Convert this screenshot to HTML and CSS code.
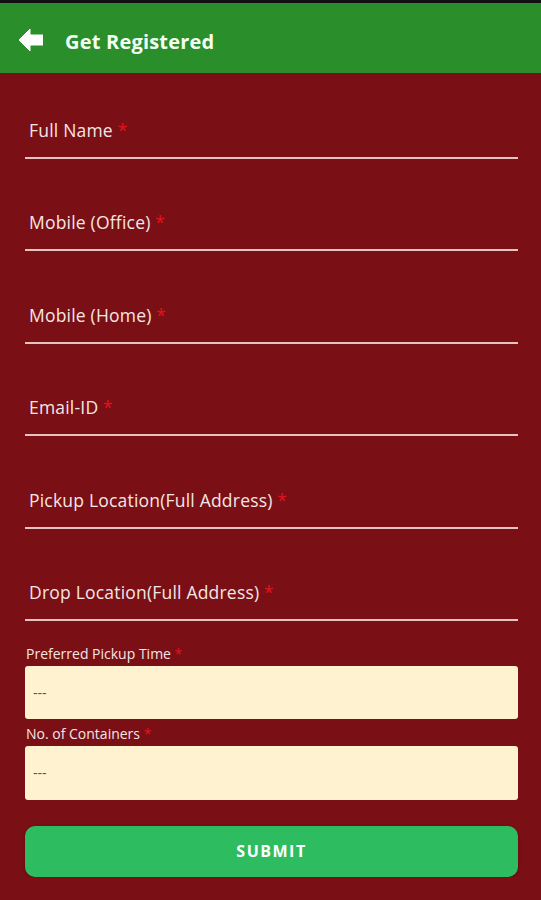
FILE: index.html
```html
<!DOCTYPE html>
<html lang="en">
<head>
    <meta charset="UTF-8">
    <meta name="viewport" content="width=device-width, initial-scale=1.0">
    <title>Get Registered</title>
    <link rel="stylesheet" href="styles.css">
</head>
<body>

    <div class="header">
        <svg class="back" width="24" height="22" viewBox="0 0 24 22">
            <path d="M0 11 L11 0 L11 6 L24 6 L24 16 L11 16 L11 22 Z" fill="#ffffff" stroke="#ffffff" stroke-width="1" stroke-linejoin="round"/>
        </svg>
        <h1>Get Registered</h1>
    </div>

    <form class="form">
        <div class="field"><label>Full Name <span class="req">*</span></label></div>
        <div class="field"><label>Mobile (Office) <span class="req">*</span></label></div>
        <div class="field"><label>Mobile (Home) <span class="req">*</span></label></div>
        <div class="field"><label>Email-ID <span class="req">*</span></label></div>
        <div class="field"><label>Pickup Location(Full Address) <span class="req">*</span></label></div>
        <div class="field"><label>Drop Location(Full Address) <span class="req">*</span></label></div>

        <div class="select-group">
            <p class="small-label">Preferred Pickup Time <span class="req">*</span></p>
            <div class="select-box">---</div>
        </div>
        <div class="select-group">
            <p class="small-label">No. of Containers <span class="req">*</span></p>
            <div class="select-box">---</div>
        </div>

        <button type="button" class="submit">SUBMIT</button>
    </form>

</body>
</html>
```

FILE: styles.css
```css
body {
    margin: 0;
    font-family: "Open Sans", Arial, sans-serif;
    background-color: #7a0f15;
    border-top: 3px solid #111;
}
.header {
    background-color: #2a8e2b;
    height: 70px;
    box-sizing: border-box;
    padding-top: 7px;
    display: flex;
    align-items: center;
    padding-left: 19px;
}
.back {
    margin-right: 22px;
    margin-top: -4px;
}
.header h1 {
    margin: 0;
    color: #f4fff4;
    font-size: 20px;
    font-weight: 700;
    letter-spacing: 0.2px;
}
.form {
    padding: 0 23px 0 25px;
}
.field {
    height: 92.4px;
    border-bottom: 2px solid #e6c3c3;
    display: flex;
    align-items: flex-end;
    padding-bottom: 15px;
    box-sizing: border-box;
}
.field:first-child {
    height: 86px;
}
.field label {
    color: #f4e6e4;
    font-size: 17.5px;
    letter-spacing: 0.2px;
    padding-left: 4px;
}
.req {
    color: #e0141c;
}
.small-label {
    margin: 0;
    padding-top: 23px;
    padding-left: 1px;
    color: #f4e6e4;
    font-size: 14px;
    line-height: 20px;
}
.select-group + .select-group .small-label {
    padding-top: 5px;
}
.select-box {
    background-color: #fff2d1;
    height: 53px;
    border-radius: 3px;
    display: flex;
    align-items: center;
    padding-left: 8px;
    color: #555;
    font-size: 14px;
    margin-top: 2px;
}
.select-group + .select-group .select-box {
    height: 54px;
}
button {
    width: 100%;
    cursor: pointer;
}
.submit {
    display: block;
    margin-top: 26px;
    height: 51px;
    background-color: #2dbd60;
    color: #fff;
    border: none;
    border-radius: 10px;
    font-family: "Open Sans", Arial, sans-serif;
    font-size: 16px;
    font-weight: 700;
    letter-spacing: 1.5px;
    box-shadow: 0 1px 3px rgba(0, 0, 0, 0.3);
}
```
